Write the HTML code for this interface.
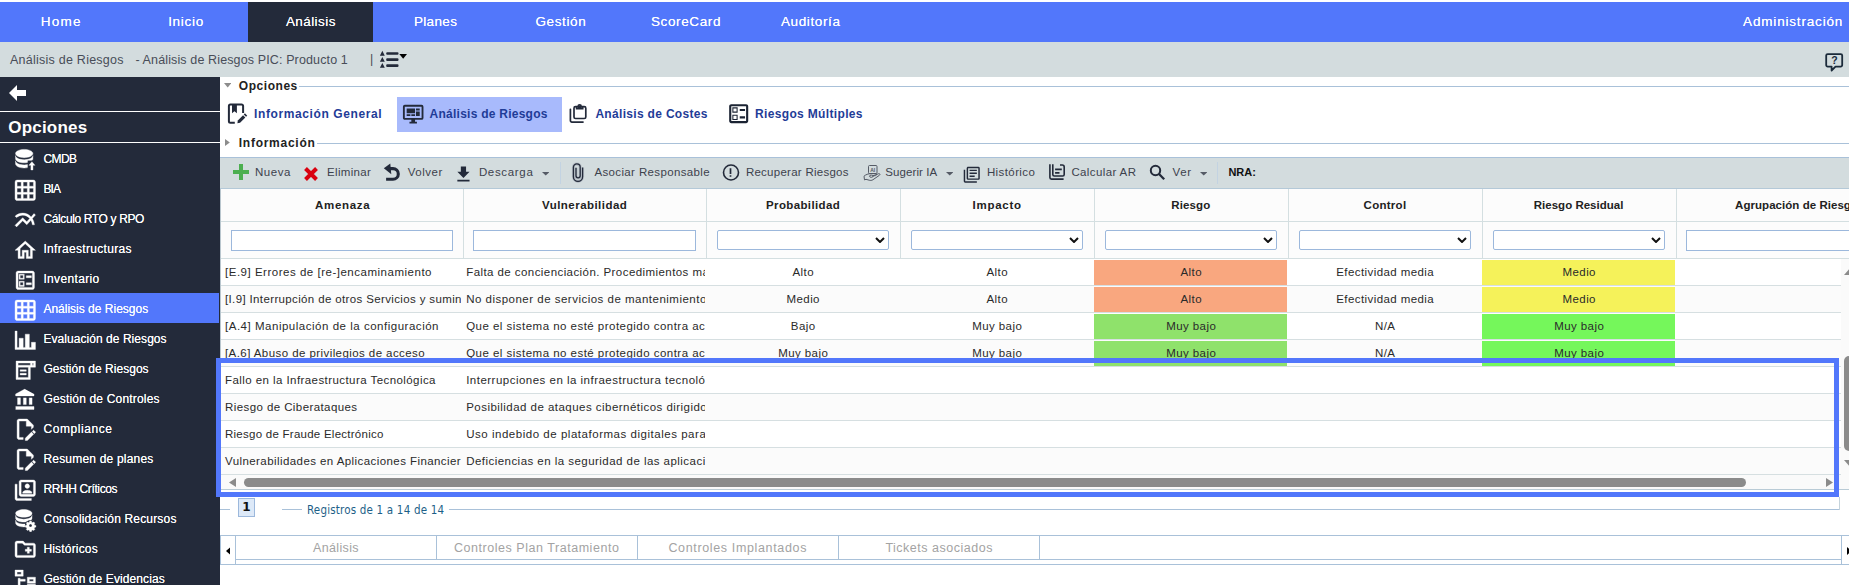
<!DOCTYPE html>
<html lang="es">
<head>
<meta charset="utf-8">
<title>Análisis de Riesgos</title>
<style>
*{box-sizing:border-box;margin:0;padding:0}
html,body{width:1849px;height:585px;overflow:hidden;background:#fff}
body{font-family:"Liberation Sans",sans-serif;font-size:12px;color:#333;position:relative}
.abs,.t,svg.i{position:absolute}
.t{white-space:nowrap;display:block}
.w{text-shadow:0 0 .5px rgba(255,255,255,.9)}
.k{text-shadow:0 0 .4px rgba(40,40,40,.6)}
#nav{position:absolute;left:0;top:2px;width:1849px;height:40px;background:#5277fb}
#crumb{position:absolute;left:0;top:42px;width:1849px;height:35px;background:#d3dcde}
#side{position:absolute;left:0;top:77px;width:220px;height:508px;background:#232a3a}
.ln{position:absolute;height:1px;background:#a9c1d9}
.vl{position:absolute;width:1px;background:#a9c1d9}
.hc{position:absolute;top:189px;height:33px;background:#fcfcfc;border-left:1px solid #d4dfe1;border-bottom:1px solid #d4dfe1}
.fc{position:absolute;top:222px;height:37px;background:#fcfcfc;border-left:1px solid #d4dfe1;border-bottom:1px solid #d4dfe1}
.in{position:absolute;top:230px;height:21px;border:1px solid #9cb8dc;background:#fff}
.se{position:absolute;top:230px;height:20px;border:1px solid #9cb8dc;background:#fff;border-radius:2px}
.row{position:absolute;left:220px;width:1621px;height:27px;border-bottom:1px solid #d6dfe1;background:#fff}
.cell{position:absolute;overflow:hidden;height:26px}
.cell .t{position:absolute}
</style>
</head>
<body>

<div id="nav"></div>
<div class="abs" style="left:248px;top:2px;width:125px;height:40px;background:#232a3a"></div>
<span class="t w" style="left:40.65px;top:12.77px;font-size:13.5px;line-height:17.5px;letter-spacing:1.246px;color:#fff;">Home</span>
<span class="t w" style="left:168.15px;top:12.77px;font-size:13.5px;line-height:17.5px;letter-spacing:0.697px;color:#fff;">Inicio</span>
<span class="t w" style="left:285.90px;top:12.77px;font-size:13.5px;line-height:17.5px;letter-spacing:0.426px;color:#fff;">Análisis</span>
<span class="t w" style="left:413.90px;top:12.77px;font-size:13.5px;line-height:17.5px;letter-spacing:0.344px;color:#fff;">Planes</span>
<span class="t w" style="left:535.40px;top:12.77px;font-size:13.5px;line-height:17.5px;letter-spacing:0.621px;color:#fff;">Gestión</span>
<span class="t w" style="left:650.90px;top:12.77px;font-size:13.5px;line-height:17.5px;letter-spacing:0.621px;color:#fff;">ScoreCard</span>
<span class="t w" style="left:780.90px;top:12.77px;font-size:13.5px;line-height:17.5px;letter-spacing:0.621px;color:#fff;">Auditoría</span>
<span class="t w" style="left:1743.10px;top:12.77px;font-size:13.5px;line-height:17.5px;letter-spacing:0.820px;color:#fff;">Administración</span>
<div id="crumb"></div>
<span class="t" style="left:10.00px;top:52.12px;font-size:12.5px;line-height:16.5px;letter-spacing:0.245px;color:#484d58;">Análisis de Riesgos</span>
<span class="t" style="left:135.40px;top:52.12px;font-size:12.5px;line-height:16.5px;letter-spacing:0.129px;color:#484d58;">- Análisis de Riesgos PIC: Producto 1</span>
<span class="t" style="left:370.10px;top:50.52px;font-size:12.5px;line-height:16.5px;letter-spacing:0.000px;color:#484d58;">|</span>
<svg class="i" style="left:378px;top:49px" width="32" height="22" viewBox="378 49 32 22"><g fill="#232a3a"><path d="M379.900 55.800h4.900l-2.450-5zM379.900 61.800h4.900l-2.450-4.900zM379.900 67.800h4.900l-2.450-4.900z"/><rect x="386.200" y="52.200" width="12.300" height="2.600" rx="1"/><rect x="386.200" y="58.300" width="12.300" height="2.600" rx="1"/><rect x="386.200" y="64.300" width="12.300" height="2.600" rx="1"/></g><path d="M399.300 54.100h7.700l-3.850 4.700z" fill="#000"/></svg>
<svg class="i" style="left:1822px;top:50px" width="26" height="24" viewBox="1822 50 26 24"><path d="M1827.700 54.100h13a1.500 1.500 0 0 1 1.500 1.500v9.500a1.500 1.500 0 0 1 -1.500 1.500h-5.200l-3.900 3.900v-3.900h-3.900a1.500 1.500 0 0 1 -1.500 -1.500v-9.500a1.500 1.500 0 0 1 1.500 -1.500z" fill="none" stroke="#1b2a3a" stroke-width="1.800" stroke-linejoin="round"/><text x="1834.500" y="64" font-family="Liberation Sans,sans-serif" font-weight="bold" font-size="10.500" text-anchor="middle" fill="#1b2a3a">?</text></svg>
<div id="side"></div>
<div class="abs" style="left:0;top:111px;width:220px;height:1px;background:#fff"></div>
<div class="abs" style="left:0;top:142px;width:220px;height:1px;background:#fff"></div>
<svg class="i" style="left:9px;top:84.500px" width="17" height="16" viewBox="0 0 17 16"><path d="M0 8L8 0v5h9v6H8v5z" fill="#fff"/></svg>
<span class="t" style="left:8.30px;top:117.01px;font-size:17px;line-height:21px;letter-spacing:0.191px;color:#fff;font-weight:bold;">Opciones</span>
<svg class="i" style="left:13px;top:147.8px" width="24.500" height="24.500" viewBox="0 0 24 24" fill="#fff" stroke="#fff" stroke-width=".35"><path transform="translate(-1.81,-1.67) scale(1.066,1.013)" d="M12,3C7.58,3 4,4.79 4,7C4,9.21 7.58,11 12,11C16.42,11 20,9.21 20,7C20,4.79 16.42,3 12,3M4,9V12C4,14.21 7.58,16 12,16C16.42,16 20,14.21 20,12V9C20,11.21 16.42,13 12,13C7.58,13 4,11.21 4,9M4,14V17C4,19.21 7.58,21 12,21C16.42,21 20,19.21 20,17V14C20,16.21 16.42,18 12,18C7.58,18 4,16.21 4,14Z"/><rect x="14.400" y="12.300" width="9" height="11" fill="#232a3a" stroke="none"/><path d="M18.550 13.400l2.950 3.600h-1.950v4.500h-2v-4.500h-1.950z"/></svg>
<span class="t w" style="left:43.40px;top:151.04px;font-size:12px;line-height:16px;letter-spacing:-0.544px;color:#fff;">CMDB</span>
<svg class="i" style="left:13px;top:177.8px" width="24.500" height="24.500" viewBox="0 0 24 24" fill="#fff" stroke="#fff" stroke-width=".35"><path d="M10,4V8H14V4H10M16,4V8H20V4H16M16,10V14H20V10H16M16,16V20H20V16H16M14,20V16H10V20H14M8,20V16H4V20H8M8,14V10H4V14H8M8,8V4H4V8H8M10,14H14V10H10V14M4,2H20A2,2 0 0,1 22,4V20A2,2 0 0,1 20,22H4C2.92,22 2,21.1 2,20V4A2,2 0 0,1 4,2Z"/></svg>
<span class="t w" style="left:43.40px;top:181.04px;font-size:12px;line-height:16px;letter-spacing:-0.821px;color:#fff;">BIA</span>
<svg class="i" style="left:13px;top:207.8px" width="24.500" height="24.500" viewBox="0 0 24 24" fill="#fff" stroke="#fff" stroke-width=".35"><path d="M22 6.92l-1.41-1.41-2.85 3.21C15.68 6.4 12.83 5 9.61 5 6.72 5 4.07 6.16 2 8l1.42 1.42C5.12 7.93 7.27 7 9.61 7c2.74 0 5.09 1.26 6.77 3.24l-2.88 3.24-4-4L2 16.99l1.5 1.5 6-6.01 4 4 4.05-4.55c.75 1.35 1.25 2.9 1.44 4.55H21c-.22-2.3-.95-4.39-2.04-6.14L22 6.92z"/></svg>
<span class="t w" style="left:43.40px;top:211.04px;font-size:12px;line-height:16px;letter-spacing:-0.370px;color:#fff;">Cálculo RTO y RPO</span>
<svg class="i" style="left:13px;top:237.8px" width="24.500" height="24.500" viewBox="0 0 24 24" fill="#fff" stroke="#fff" stroke-width=".35"><path d="M12 5.69L17 10.19V18H15V12H9V18H7V10.19L12 5.69M12 3L2 12H5V20H11V14H13V20H19V12H22L12 3Z"/></svg>
<span class="t w" style="left:43.40px;top:241.04px;font-size:12px;line-height:16px;letter-spacing:0.315px;color:#fff;">Infraestructuras</span>
<svg class="i" style="left:13px;top:267.8px" width="24.500" height="24.500" viewBox="0 0 24 24" fill="#fff" stroke="#fff" stroke-width=".35"><path d="M13 7.5H18V9.5H13V7.5M13 14.5H18V16.5H13V14.5M19 3C20.1 3 21 3.9 21 5V19C21 20.1 20.1 21 19 21H5C3.9 21 3 20.1 3 19V5C3 3.9 3.9 3 5 3H19M19 19V5H5V19H19M11 6V11H6V6H11M10 10V7H7V10H10M11 13V18H6V13H11M10 17V14H7V17H10Z"/></svg>
<span class="t w" style="left:43.40px;top:271.04px;font-size:12px;line-height:16px;letter-spacing:0.355px;color:#fff;">Inventario</span>
<div class="abs" style="left:0;top:293px;width:219px;height:30px;background:#5277fb"></div>
<svg class="i" style="left:13px;top:297.8px" width="24.500" height="24.500" viewBox="0 0 24 24" fill="#fff" stroke="#fff" stroke-width=".35"><path d="M10,4V8H14V4H10M16,4V8H20V4H16M16,10V14H20V10H16M16,16V20H20V16H16M14,20V16H10V20H14M8,20V16H4V20H8M8,14V10H4V14H8M8,8V4H4V8H8M10,14H14V10H10V14M4,2H20A2,2 0 0,1 22,4V20A2,2 0 0,1 20,22H4C2.92,22 2,21.1 2,20V4A2,2 0 0,1 4,2Z"/></svg>
<span class="t w" style="left:43.40px;top:301.04px;font-size:12px;line-height:16px;letter-spacing:0.004px;color:#fff;">Análisis de Riesgos</span>
<svg class="i" style="left:13px;top:327.8px" width="24.500" height="24.500" viewBox="0 0 24 24" fill="#fff" stroke="#fff" stroke-width=".35"><path d="M22,21H2V3H4V19H6V10H10V19H12V6H16V19H18V14H22V21Z"/></svg>
<span class="t w" style="left:43.40px;top:331.04px;font-size:12px;line-height:16px;letter-spacing:0.056px;color:#fff;">Evaluación de Riesgos</span>
<svg class="i" style="left:13px;top:357.8px" width="24.500" height="24.500" viewBox="0 0 24 24" fill="#fff" stroke="#fff" stroke-width=".35"><path d="M3 3h19v6h-5v12H3zM5 5v2h12V5zM5 9v10h10V9zM19 5v2h1V5zM7 11.5h6v1.6H7zM7 15h6v1.600H7z" fill-rule="evenodd"/></svg>
<span class="t w" style="left:43.40px;top:361.04px;font-size:12px;line-height:16px;letter-spacing:0.028px;color:#fff;">Gestión de Riesgos</span>
<svg class="i" style="left:13px;top:387.8px" width="24.500" height="24.500" viewBox="0 0 24 24" fill="#fff" stroke="#fff" stroke-width=".35"><path transform="translate(.65,.13) scale(.95)" d="M11.5,1L2,6V8H21V6M16,10V17H19V10M2,22H21V19H2M10,10V17H13V10M4,10V17H7V10H4Z"/></svg>
<span class="t w" style="left:43.40px;top:391.04px;font-size:12px;line-height:16px;letter-spacing:0.177px;color:#fff;">Gestión de Controles</span>
<svg class="i" style="left:13px;top:417.1px" width="24.500" height="24.500" viewBox="0 0 24 24" fill="#fff" stroke="#fff" stroke-width=".35"><path d="M10 20H6V4H13V9H18V12.1L20 10.1V8L14 2H6C4.9 2 4 2.9 4 4V20C4 21.1 4.9 22 6 22H10V20M20.2 13C20.3 13 20.5 13.1 20.6 13.2L21.9 14.5C22.1 14.7 22.1 15.1 21.9 15.3L20.9 16.3L18.8 14.2L19.8 13.2C19.9 13.1 20 13 20.2 13M20.2 16.9L14.1 23H12V20.9L18.1 14.8L20.2 16.9Z"/></svg>
<span class="t w" style="left:43.40px;top:421.04px;font-size:12px;line-height:16px;letter-spacing:0.582px;color:#fff;">Compliance</span>
<svg class="i" style="left:13px;top:447.1px" width="24.500" height="24.500" viewBox="0 0 24 24" fill="#fff" stroke="#fff" stroke-width=".35"><path d="M10 20H6V4H13V9H18V12.1L20 10.1V8L14 2H6C4.9 2 4 2.9 4 4V20C4 21.1 4.9 22 6 22H10V20M20.2 13C20.3 13 20.5 13.1 20.6 13.2L21.9 14.5C22.1 14.7 22.1 15.1 21.9 15.3L20.9 16.3L18.8 14.2L19.8 13.2C19.9 13.1 20 13 20.2 13M20.2 16.9L14.1 23H12V20.9L18.1 14.8L20.2 16.9Z"/></svg>
<span class="t w" style="left:43.40px;top:451.04px;font-size:12px;line-height:16px;letter-spacing:0.198px;color:#fff;">Resumen de planes</span>
<svg class="i" style="left:13px;top:477.8px" width="24.500" height="24.500" viewBox="0 0 24 24" fill="#fff" stroke="#fff" stroke-width=".35"><path d="M4 6H2V20C2 21.11 2.9 22 4 22H18V20H4V6M18.5 14.25C18.5 12.75 15.5 12 14 12S9.5 12.75 9.5 14.25V15H18.5M14 10.25C15.24 10.25 16.25 9.24 16.25 8S15.24 5.75 14 5.75 11.75 6.76 11.75 8 12.76 10.25 14 10.25M20 2H8C6.9 2 6 2.9 6 4V16C6 17.11 6.9 18 8 18H20C21.11 18 22 17.11 22 16V4C22 2.9 21.11 2 20 2M20 16H8V4H20V16Z"/></svg>
<span class="t w" style="left:43.40px;top:481.04px;font-size:12px;line-height:16px;letter-spacing:-0.372px;color:#fff;">RRHH Críticos</span>
<svg class="i" style="left:13px;top:507.8px" width="24.500" height="24.500" viewBox="0 0 24 24" fill="#fff" stroke="#fff" stroke-width=".35"><path transform="translate(-1.47,-1.37) scale(1.005,.948)" d="M12,3C7.58,3 4,4.79 4,7C4,9.21 7.58,11 12,11C16.42,11 20,9.21 20,7C20,4.79 16.42,3 12,3M4,9V12C4,14.21 7.58,16 12,16C16.42,16 20,14.21 20,12V9C20,11.21 16.42,13 12,13C7.58,13 4,11.21 4,9M4,14V17C4,19.21 7.58,21 12,21C16.42,21 20,19.21 20,17V14C20,16.21 16.42,18 12,18C7.58,18 4,16.21 4,14Z"/><circle cx="17.200" cy="17.200" r="5.500" fill="#232a3a" stroke="none"/><path transform="translate(1.070,1.070) scale(.87)" d="M18.500 13.200l1 .1.300 1.400 1 .5 1.300-.7 1.300 1.300-.7 1.300.5 1 1.400.3v1.900l-1.400.3-.5 1 .7 1.300-1.300 1.300-1.300-.7-1 .5-.3 1.400h-1.900l-.3-1.400-1-.5-1.300.7-1.300-1.300.7-1.300-.5-1-1.400-.3v-1.900l1.400-.3.5-1-.7-1.300 1.300-1.300 1.300.7 1-.5.300-1.400zM18.500 16.800a1.700 1.700 0 1 0 0 3.400 1.700 1.700 0 0 0 0-3.400z" fill-rule="evenodd"/></svg>
<span class="t w" style="left:43.40px;top:511.04px;font-size:12px;line-height:16px;letter-spacing:0.171px;color:#fff;">Consolidación Recursos</span>
<svg class="i" style="left:13px;top:537.3px" width="24.500" height="24.500" viewBox="0 0 24 24" fill="#fff" stroke="#fff" stroke-width=".35"><path d="M20 6h-8l-2-2H4c-1.11 0-1.99.89-1.99 2L2 18c0 1.11.89 2 2 2h16c1.11 0 2-.89 2-2V8c0-1.11-.89-2-2-2zm0 12H4V6h5.17l2 2H20v10zm-8-4h2v2h2v-2h2v-2h-2v-2h-2v2h-2z"/></svg>
<span class="t w" style="left:43.40px;top:541.04px;font-size:12px;line-height:16px;letter-spacing:0.180px;color:#fff;">Históricos</span>
<svg class="i" style="left:13px;top:567.8px" width="24.500" height="24.500" viewBox="0 0 24 24" fill="#fff" stroke="#fff" stroke-width=".35"><path d="M12 13H7V18H12V20H5V10H7V11H12V13M8 4V6H4V4H8M10 2H2V8H10V2M20 11V13H16V11H20M22 9H14V15H22V9M20 18V20H16V18H20M22 16H14V22H22V16Z"/></svg>
<span class="t w" style="left:43.40px;top:571.04px;font-size:12px;line-height:16px;letter-spacing:0.095px;color:#fff;">Gestión de Evidencias</span>
<div class="ln" style="left:299px;top:86px;width:1550px"></div>
<span class="t" style="left:238.80px;top:78.34px;font-size:12px;line-height:16px;letter-spacing:0.546px;color:#222;font-weight:bold;">Opciones</span>
<svg class="i" style="left:223.500px;top:83.400px" width="7.400" height="4.400" viewBox="0 0 7.400 4.400"><path d="M0 0h7.400L3.700 4.400z" fill="#8c8c8c"/></svg>
<div class="ln" style="left:317px;top:143px;width:1532px"></div>
<span class="t" style="left:238.80px;top:134.84px;font-size:12px;line-height:16px;letter-spacing:0.733px;color:#222;font-weight:bold;">Información</span>
<svg class="i" style="left:225.200px;top:139.300px" width="4.800" height="7" viewBox="0 0 4.800 7"><path d="M0 0v7L4.800 3.500z" fill="#8c8c8c"/></svg>
<div class="abs" style="left:397px;top:97px;width:165px;height:35px;background:#a8bafc"></div>
<span class="t" style="left:254.00px;top:106.24px;font-size:12px;line-height:16px;letter-spacing:0.606px;color:#1f3c97;font-weight:bold;">Información General</span>
<span class="t" style="left:429.60px;top:106.24px;font-size:12px;line-height:16px;letter-spacing:0.246px;color:#1f3c97;font-weight:bold;">Análisis de Riesgos</span>
<span class="t" style="left:595.40px;top:106.24px;font-size:12px;line-height:16px;letter-spacing:0.317px;color:#1f3c97;font-weight:bold;">Análisis de Costes</span>
<span class="t" style="left:755.00px;top:106.24px;font-size:12px;line-height:16px;letter-spacing:0.343px;color:#1f3c97;font-weight:bold;">Riesgos Múltiples</span>
<svg class="i" style="left:222px;top:98px" width="30" height="30" viewBox="0 0 30 30"><path d="M21.100 14.900V8a1.500 1.500 0 0 0 -1.500 -1.500H8.400a1.500 1.500 0 0 0 -1.500 1.500V23.200a1.500 1.500 0 0 0 1.500 1.500H12.800" fill="none" stroke="#232a3a" stroke-width="2"/><path d="M10 6.500h4.900v8.700l-2.450-1.900-2.450 1.900z" fill="#232a3a"/><path d="M15.400 25.200L15.830 22.510L21.060 17.280L23.320 19.540L18.090 24.770Z" fill="#232a3a"/><path d="M22.900 17.700L24.100 16.500" stroke="#232a3a" stroke-width="3.200" fill="none"/></svg>
<svg class="i" style="left:402.200px;top:103px" width="22.400" height="22.400" viewBox="0 0 24 24"><path fill="#232a3a" d="M21,16V4H3V16H21M21,2A2,2 0 0,1 23,4V16A2,2 0 0,1 21,18H14V20H16V22H8V20H10V18H3C1.890,18 1,17.100 1,16V4C1,2.890 1.890,2 3,2H21M5,6H14V11H5V6M15,6H19V8H15V6M19,9V14H15V9H19M5,12H9V14H5V12M10,12H14V14H10V12Z"/></svg>
<svg class="i" style="left:564px;top:98px" width="30" height="30" viewBox="0 0 30 30" fill="none" stroke="#232a3a" stroke-width="1.700"><rect x="10" y="8.700" width="11.800" height="11.800" rx="1.500"/><path d="M12.600 8.700v1.900h6.100V8.700"/><circle cx="15.650" cy="8.400" r="1.500"/><path d="M6.400 11.300V22.600a1.500 1.500 0 0 0 1.500 1.500H19" stroke-linecap="round"/></svg>
<svg class="i" style="left:725.700px;top:100.800px" width="25.400" height="25.400" viewBox="0 0 24 24"><path fill="#1b2333" d="M13 7.500H18V9.500H13V7.500M13 14.500H18V16.500H13V14.500M19 3C20.100 3 21 3.900 21 5V19C21 20.100 20.100 21 19 21H5C3.900 21 3 20.100 3 19V5C3 3.900 3.900 3 5 3H19M19 19V5H5V19H19M11 6V11H6V6H11M10 10V7H7V10H10M11 13V18H6V13H11M10 17V14H7V17H10Z"/></svg>
<div class="abs" style="left:220px;top:157px;width:1629px;height:32px;background:#d3dcde;border-top:1px solid #a9c1d9;border-bottom:1px solid #b4c9d8"></div>
<span class="t" style="left:255.00px;top:164.77px;font-size:11.5px;line-height:15.5px;letter-spacing:0.539px;color:#3d424d;">Nueva</span>
<span class="t" style="left:327.00px;top:164.77px;font-size:11.5px;line-height:15.5px;letter-spacing:0.337px;color:#3d424d;">Eliminar</span>
<span class="t" style="left:407.80px;top:164.77px;font-size:11.5px;line-height:15.5px;letter-spacing:0.507px;color:#3d424d;">Volver</span>
<span class="t" style="left:478.90px;top:164.77px;font-size:11.5px;line-height:15.5px;letter-spacing:0.669px;color:#3d424d;">Descarga</span>
<span class="t" style="left:594.40px;top:164.77px;font-size:11.5px;line-height:15.5px;letter-spacing:0.368px;color:#3d424d;">Asociar Responsable</span>
<span class="t" style="left:745.90px;top:164.77px;font-size:11.5px;line-height:15.5px;letter-spacing:0.260px;color:#3d424d;">Recuperar Riesgos</span>
<span class="t" style="left:885.30px;top:164.77px;font-size:11.5px;line-height:15.5px;letter-spacing:0.085px;color:#3d424d;">Sugerir IA</span>
<span class="t" style="left:986.90px;top:164.77px;font-size:11.5px;line-height:15.5px;letter-spacing:0.408px;color:#3d424d;">Histórico</span>
<span class="t" style="left:1071.40px;top:164.77px;font-size:11.5px;line-height:15.5px;letter-spacing:0.388px;color:#3d424d;">Calcular AR</span>
<span class="t" style="left:1172.50px;top:164.77px;font-size:11.5px;line-height:15.5px;letter-spacing:0.719px;color:#3d424d;">Ver</span>
<span class="t" style="left:1228.40px;top:165.19px;font-size:11px;line-height:15px;letter-spacing:0.001px;color:#111;font-weight:bold;">NRA:</span>
<div class="vl" style="left:559.500px;top:162px;height:22px;background:#c3d3e2"></div>
<div class="vl" style="left:1217px;top:162px;height:22px;background:#c3d3e2"></div>
<svg class="i" style="left:541.6px;top:172.200px" width="7.400" height="3.600" viewBox="0 0 7.400 3.600"><path d="M0 0h7.400L3.700 3.600z" fill="#555b66"/></svg>
<svg class="i" style="left:946.1px;top:172.200px" width="7.400" height="3.600" viewBox="0 0 7.400 3.600"><path d="M0 0h7.400L3.700 3.600z" fill="#555b66"/></svg>
<svg class="i" style="left:1199.9px;top:172.200px" width="7.400" height="3.600" viewBox="0 0 7.400 3.600"><path d="M0 0h7.400L3.700 3.600z" fill="#555b66"/></svg>
<svg class="i" style="left:233px;top:164px" width="16" height="16" viewBox="0 0 16 16"><path d="M6 0h4v6h6v4h-6v6H6v-6H0V6h6z" fill="#4caf50"/></svg>
<svg class="i" style="left:304px;top:167px" width="14" height="14" viewBox="0 0 14 14"><path d="M1.500 1.500l11 11M12.500 1.500l-11 11" stroke="#d9000f" stroke-width="4" fill="none"/></svg>
<svg class="i" style="left:378px;top:158px" width="30" height="30" viewBox="0 0 30 30"><path d="M12 10.600H15A5.300 5.300 0 0 1 15 21.200H8.100" fill="none" stroke="#232a3a" stroke-width="3.100"/><path d="M5.800 10.300L12.300 5.500L13.300 16.300z" fill="#232a3a"/></svg>
<svg class="i" style="left:452.650px;top:163.500px" width="20.900" height="20.900" viewBox="0 0 24 24"><path fill="#232a3a" d="M5,20H19V18H5M19,9H15V3H9V9H5L12,16L19,9Z"/></svg>
<svg class="i" style="left:570px;top:160px" width="16" height="26" viewBox="570 160 16 26"><path d="M582.600 167.500V176.800A4.600 4.600 0 0 1 573.400 176.800V167.300A3.400 3.400 0 0 1 580.200 167.300V175.800A2.100 2.100 0 0 1 576 175.800V167.700" fill="none" stroke="#b4bcc4" stroke-width="3"/><path d="M582.600 167.500V176.800A4.600 4.600 0 0 1 573.400 176.800V167.300A3.400 3.400 0 0 1 580.200 167.300V175.800A2.100 2.100 0 0 1 576 175.800V167.700" fill="none" stroke="#232a3a" stroke-width="1.300"/></svg>
<svg class="i" style="left:720px;top:162px" width="22" height="22" viewBox="720 162 22 22"><circle cx="731" cy="172.500" r="7.500" fill="none" stroke="#232a3a" stroke-width="1.600"/><path d="M730.500 168.300v5.600M730.500 175.300v1.500" stroke="#232a3a" stroke-width="1.700"/></svg>
<svg class="i" style="left:860px;top:162px" width="24" height="22" viewBox="860 162 24 22"><g fill="none" stroke="#555b66" stroke-width="1"><rect x="868.500" y="165.500" width="8.500" height="8" rx="1"/><path d="M864 176.200c1.500-1.500 4.500-2.600 7-2.600h4.500c1.500 0 1.500 1.800 0 2l-3 .4 6-2.300c1.300-.5 2 .8 .9 1.600l-6.400 4.400c-1.200.8-2.500.9-3.800.5l-3.200-.9-1.500.6z"/><ellipse cx="871.300" cy="176.200" rx="1.800" ry="1.100"/></g><text x="872.750" y="171.900" font-family="Liberation Sans,sans-serif" font-size="5" font-weight="bold" text-anchor="middle" fill="#555b66">AI</text></svg>
<svg class="i" style="left:963.400px;top:166.300px" width="17.500" height="17.500" viewBox="0 0 24 24"><path fill="#232a3a" d="M16,15H9V13H16V15M19,11H9V9H19V11M19,7H9V5H19V7M3,5V21H19V23H3A2,2 0 0,1 1,21V5H3M21,1A2,2 0 0,1 23,3V17C23,18.110 22.110,19 21,19H7A2,2 0 0,1 5,17V3C5,1.890 5.890,1 7,1H21M7,3V17H21V3H7Z"/></svg>
<svg class="i" style="left:1046px;top:161px" width="22" height="22" viewBox="1046 161 22 22"><g fill="none" stroke="#232a3a" stroke-width="1.600"><path d="M1049.900 164.200V177.600a1.500 1.500 0 0 0 1.500 1.500H1063.600"/><path d="M1052.800 164.200V174.500a1.500 1.500 0 0 0 1.500 1.500H1062.700a1.500 1.500 0 0 0 1.500 -1.500V167a2 2 0 0 0 -2 -2H1060"/><path d="M1055.100 169.400h6.700M1055.100 172.900h4.400"/></g></svg>
<svg class="i" style="left:1146px;top:161px" width="22" height="22" viewBox="1146 161 22 22"><circle cx="1155.500" cy="170.500" r="4.700" fill="none" stroke="#232a3a" stroke-width="2"/><path d="M1159 174l5.200 5.200" stroke="#232a3a" stroke-width="2.300"/></svg>
<div class="hc" style="left:220px;width:243px"></div><div class="fc" style="left:220px;width:243px"></div>
<span class="t" style="left:315.00px;top:197.77px;font-size:11.5px;line-height:15.5px;letter-spacing:0.684px;color:#222;font-weight:bold;">Amenaza</span>
<div class="in" style="left:231px;width:222px"></div>
<div class="hc" style="left:463px;width:243px"></div><div class="fc" style="left:463px;width:243px"></div>
<span class="t" style="left:542.00px;top:197.77px;font-size:11.5px;line-height:15.5px;letter-spacing:0.461px;color:#222;font-weight:bold;">Vulnerabilidad</span>
<div class="in" style="left:473px;width:223px"></div>
<div class="hc" style="left:706px;width:194px"></div><div class="fc" style="left:706px;width:194px"></div>
<span class="t" style="left:766.00px;top:197.77px;font-size:11.5px;line-height:15.5px;letter-spacing:0.368px;color:#222;font-weight:bold;">Probabilidad</span>
<div class="se" style="left:717px;width:172px"></div>
<svg class="i" style="left:875px;top:237px" width="10" height="6" viewBox="0 0 10 6"><path d="M1 1l4 4 4-4" fill="none" stroke="#111" stroke-width="2"/></svg>
<div class="hc" style="left:900px;width:194px"></div><div class="fc" style="left:900px;width:194px"></div>
<span class="t" style="left:972.60px;top:197.77px;font-size:11.5px;line-height:15.5px;letter-spacing:0.735px;color:#222;font-weight:bold;">Impacto</span>
<div class="se" style="left:911px;width:172px"></div>
<svg class="i" style="left:1069px;top:237px" width="10" height="6" viewBox="0 0 10 6"><path d="M1 1l4 4 4-4" fill="none" stroke="#111" stroke-width="2"/></svg>
<div class="hc" style="left:1094px;width:194px"></div><div class="fc" style="left:1094px;width:194px"></div>
<span class="t" style="left:1171.30px;top:197.77px;font-size:11.5px;line-height:15.5px;letter-spacing:0.132px;color:#222;font-weight:bold;">Riesgo</span>
<div class="se" style="left:1105px;width:172px"></div>
<svg class="i" style="left:1263px;top:237px" width="10" height="6" viewBox="0 0 10 6"><path d="M1 1l4 4 4-4" fill="none" stroke="#111" stroke-width="2"/></svg>
<div class="hc" style="left:1288px;width:194px"></div><div class="fc" style="left:1288px;width:194px"></div>
<span class="t" style="left:1363.60px;top:197.77px;font-size:11.5px;line-height:15.5px;letter-spacing:0.270px;color:#222;font-weight:bold;">Control</span>
<div class="se" style="left:1299px;width:172px"></div>
<svg class="i" style="left:1457px;top:237px" width="10" height="6" viewBox="0 0 10 6"><path d="M1 1l4 4 4-4" fill="none" stroke="#111" stroke-width="2"/></svg>
<div class="hc" style="left:1482px;width:194px"></div><div class="fc" style="left:1482px;width:194px"></div>
<span class="t" style="left:1533.80px;top:197.77px;font-size:11.5px;line-height:15.5px;letter-spacing:0.009px;color:#222;font-weight:bold;">Riesgo Residual</span>
<div class="se" style="left:1493px;width:172px"></div>
<svg class="i" style="left:1651px;top:237px" width="10" height="6" viewBox="0 0 10 6"><path d="M1 1l4 4 4-4" fill="none" stroke="#111" stroke-width="2"/></svg>
<div class="hc" style="left:1676px;width:243px"></div><div class="fc" style="left:1676px;width:243px"></div>
<span class="t" style="left:1735.10px;top:197.77px;font-size:11.5px;line-height:15.5px;letter-spacing:0.043px;color:#222;font-weight:bold;">Agrupación de Riesgos</span>
<div class="in" style="left:1686px;width:223px"></div>
<div class="row" style="top:259px;background:#fff"></div>
<div class="cell" style="left:221px;top:259px;width:240.300px">
<span class="t" style="left:4.00px;top:5.57px;font-size:11.5px;line-height:15.5px;letter-spacing:0.513px;color:#2a2a2a;">[E.9] Errores de [re-]encaminamiento</span>
</div>
<div class="cell" style="left:464px;top:259px;width:241px">
<span class="t" style="left:2.20px;top:5.57px;font-size:11.5px;line-height:15.5px;letter-spacing:0.430px;color:#2a2a2a;">Falta de concienciación. Procedimientos más</span>
</div>
<div class="abs" style="left:1094px;top:260px;width:193px;height:25px;background:#f9a77f"></div>
<div class="abs" style="left:1482px;top:260px;width:193px;height:25px;background:#f5f25a"></div>
<span class="t" style="left:792.46px;top:264.57px;font-size:11.5px;line-height:15.5px;letter-spacing:0.420px;color:#2a2a2a;">Alto</span>
<span class="t" style="left:986.46px;top:264.57px;font-size:11.5px;line-height:15.5px;letter-spacing:0.420px;color:#2a2a2a;">Alto</span>
<span class="t" style="left:1180.46px;top:264.57px;font-size:11.5px;line-height:15.5px;letter-spacing:0.420px;color:#2a2a2a;">Alto</span>
<span class="t" style="left:1336.25px;top:264.57px;font-size:11.5px;line-height:15.5px;letter-spacing:0.420px;color:#2a2a2a;">Efectividad media</span>
<span class="t" style="left:1562.50px;top:264.57px;font-size:11.5px;line-height:15.5px;letter-spacing:0.420px;color:#2a2a2a;">Medio</span>
<div class="row" style="top:286px;background:#fbfbfb"></div>
<div class="cell" style="left:221px;top:286px;width:240.300px">
<span class="t" style="left:4.00px;top:5.57px;font-size:11.5px;line-height:15.5px;letter-spacing:0.363px;color:#2a2a2a;">[I.9] Interrupción de otros Servicios y suministros</span>
</div>
<div class="cell" style="left:464px;top:286px;width:241px">
<span class="t" style="left:2.20px;top:5.57px;font-size:11.5px;line-height:15.5px;letter-spacing:0.489px;color:#2a2a2a;">No disponer de servicios de mantenimiento</span>
</div>
<div class="abs" style="left:1094px;top:287px;width:193px;height:25px;background:#f9a77f"></div>
<div class="abs" style="left:1482px;top:287px;width:193px;height:25px;background:#f5f25a"></div>
<span class="t" style="left:786.50px;top:291.57px;font-size:11.5px;line-height:15.5px;letter-spacing:0.420px;color:#2a2a2a;">Medio</span>
<span class="t" style="left:986.46px;top:291.57px;font-size:11.5px;line-height:15.5px;letter-spacing:0.420px;color:#2a2a2a;">Alto</span>
<span class="t" style="left:1180.46px;top:291.57px;font-size:11.5px;line-height:15.5px;letter-spacing:0.420px;color:#2a2a2a;">Alto</span>
<span class="t" style="left:1336.25px;top:291.57px;font-size:11.5px;line-height:15.5px;letter-spacing:0.420px;color:#2a2a2a;">Efectividad media</span>
<span class="t" style="left:1562.50px;top:291.57px;font-size:11.5px;line-height:15.5px;letter-spacing:0.420px;color:#2a2a2a;">Medio</span>
<div class="row" style="top:313px;background:#fff"></div>
<div class="cell" style="left:221px;top:313px;width:240.300px">
<span class="t" style="left:4.00px;top:5.57px;font-size:11.5px;line-height:15.5px;letter-spacing:0.518px;color:#2a2a2a;">[A.4] Manipulación de la configuración</span>
</div>
<div class="cell" style="left:464px;top:313px;width:241px">
<span class="t" style="left:2.20px;top:5.57px;font-size:11.5px;line-height:15.5px;letter-spacing:0.472px;color:#2a2a2a;">Que el sistema no esté protegido contra accesos</span>
</div>
<div class="abs" style="left:1094px;top:314px;width:193px;height:25px;background:#8fe26b"></div>
<div class="abs" style="left:1482px;top:314px;width:193px;height:25px;background:#75f75b"></div>
<span class="t" style="left:790.86px;top:318.57px;font-size:11.5px;line-height:15.5px;letter-spacing:0.420px;color:#2a2a2a;">Bajo</span>
<span class="t" style="left:972.20px;top:318.57px;font-size:11.5px;line-height:15.5px;letter-spacing:0.420px;color:#2a2a2a;">Muy bajo</span>
<span class="t" style="left:1166.20px;top:318.57px;font-size:11.5px;line-height:15.5px;letter-spacing:0.420px;color:#2a2a2a;">Muy bajo</span>
<span class="t" style="left:1374.99px;top:318.57px;font-size:11.5px;line-height:15.5px;letter-spacing:0.420px;color:#2a2a2a;">N/A</span>
<span class="t" style="left:1554.20px;top:318.57px;font-size:11.5px;line-height:15.5px;letter-spacing:0.420px;color:#2a2a2a;">Muy bajo</span>
<div class="row" style="top:340px;background:#fbfbfb"></div>
<div class="cell" style="left:221px;top:340px;width:240.300px">
<span class="t" style="left:4.00px;top:5.57px;font-size:11.5px;line-height:15.5px;letter-spacing:0.427px;color:#2a2a2a;">[A.6] Abuso de privilegios de acceso</span>
</div>
<div class="cell" style="left:464px;top:340px;width:241px">
<span class="t" style="left:2.20px;top:5.57px;font-size:11.5px;line-height:15.5px;letter-spacing:0.472px;color:#2a2a2a;">Que el sistema no esté protegido contra accesos</span>
</div>
<div class="abs" style="left:1094px;top:341px;width:193px;height:25px;background:#8fe26b"></div>
<div class="abs" style="left:1482px;top:341px;width:193px;height:25px;background:#75f75b"></div>
<span class="t" style="left:778.20px;top:345.57px;font-size:11.5px;line-height:15.5px;letter-spacing:0.420px;color:#2a2a2a;">Muy bajo</span>
<span class="t" style="left:972.20px;top:345.57px;font-size:11.5px;line-height:15.5px;letter-spacing:0.420px;color:#2a2a2a;">Muy bajo</span>
<span class="t" style="left:1166.20px;top:345.57px;font-size:11.5px;line-height:15.5px;letter-spacing:0.420px;color:#2a2a2a;">Muy bajo</span>
<span class="t" style="left:1374.99px;top:345.57px;font-size:11.5px;line-height:15.5px;letter-spacing:0.420px;color:#2a2a2a;">N/A</span>
<span class="t" style="left:1554.20px;top:345.57px;font-size:11.5px;line-height:15.5px;letter-spacing:0.420px;color:#2a2a2a;">Muy bajo</span>
<div class="row" style="top:367px;background:#fff"></div>
<div class="cell" style="left:221px;top:367px;width:240.300px">
<span class="t" style="left:4.00px;top:5.57px;font-size:11.5px;line-height:15.5px;letter-spacing:0.431px;color:#2a2a2a;">Fallo en la Infraestructura Tecnológica</span>
</div>
<div class="cell" style="left:464px;top:367px;width:241px">
<span class="t" style="left:2.20px;top:5.57px;font-size:11.5px;line-height:15.5px;letter-spacing:0.484px;color:#2a2a2a;">Interrupciones en la infraestructura tecnológica</span>
</div>
<div class="row" style="top:394px;background:#fbfbfb"></div>
<div class="cell" style="left:221px;top:394px;width:240.300px">
<span class="t" style="left:4.00px;top:5.57px;font-size:11.5px;line-height:15.5px;letter-spacing:0.415px;color:#2a2a2a;">Riesgo de Ciberataques</span>
</div>
<div class="cell" style="left:464px;top:394px;width:241px">
<span class="t" style="left:2.20px;top:5.57px;font-size:11.5px;line-height:15.5px;letter-spacing:0.465px;color:#2a2a2a;">Posibilidad de ataques cibernéticos dirigidos</span>
</div>
<div class="row" style="top:421px;background:#fff"></div>
<div class="cell" style="left:221px;top:421px;width:240.300px">
<span class="t" style="left:4.00px;top:5.57px;font-size:11.5px;line-height:15.5px;letter-spacing:0.255px;color:#2a2a2a;">Riesgo de Fraude Electrónico</span>
</div>
<div class="cell" style="left:464px;top:421px;width:241px">
<span class="t" style="left:2.20px;top:5.57px;font-size:11.5px;line-height:15.5px;letter-spacing:0.527px;color:#2a2a2a;">Uso indebido de plataformas digitales para</span>
</div>
<div class="row" style="top:448px;background:#fbfbfb"></div>
<div class="cell" style="left:221px;top:448px;width:240.300px">
<span class="t" style="left:4.00px;top:5.57px;font-size:11.5px;line-height:15.5px;letter-spacing:0.426px;color:#2a2a2a;">Vulnerabilidades en Aplicaciones Financieras</span>
</div>
<div class="cell" style="left:464px;top:448px;width:241px">
<span class="t" style="left:2.20px;top:5.57px;font-size:11.5px;line-height:15.5px;letter-spacing:0.459px;color:#2a2a2a;">Deficiencias en la seguridad de las aplicaciones</span>
</div>
<div class="vl" style="left:220px;top:189px;height:301px;background:#b9c6ce"></div>
<div class="abs" style="left:220px;top:475px;width:1621px;height:15px;background:#fafafa"></div>
<div class="abs" style="left:244px;top:478px;width:1502px;height:9px;border-radius:5px;background:#8b8b8b"></div>
<svg class="i" style="left:228.500px;top:478px" width="7" height="9" viewBox="0 0 7 9"><path d="M7 0v9L0 4.500z" fill="#8b8b8b"/></svg>
<svg class="i" style="left:1826px;top:478px" width="7" height="9" viewBox="0 0 7 9"><path d="M0 0v9L7 4.500z" fill="#8b8b8b"/></svg>
<div class="ln" style="left:220px;top:489px;width:1629px;background:#b9cbd6"></div>
<div class="abs" style="left:1841px;top:259px;width:8px;height:230px;background:#fafafa"></div>
<div class="abs" style="left:1844px;top:356px;width:12px;height:95px;border-radius:5px;background:#8b8b8b"></div>
<svg class="i" style="left:1844px;top:268px" width="12" height="7" viewBox="0 0 12 7"><path d="M0 7h12L6 0z" fill="#8b8b8b"/></svg>
<svg class="i" style="left:1844px;top:460px" width="12" height="7" viewBox="0 0 12 7"><path d="M0 0h12L6 7z" fill="#8b8b8b"/></svg>
<div class="ln" style="left:220px;top:509px;width:1620px"></div>
<div class="vl" style="left:1839px;top:497px;height:13px;background:#c4d3dc"></div>
<div class="abs" style="left:230px;top:500px;width:52px;height:18px;background:#fff"></div>
<div class="abs" style="left:238px;top:498px;width:17px;height:19px;border:1px solid #9cb8dc;background:#dde9f8;text-align:center;line-height:17px;font-family:'DejaVu Sans',sans-serif;font-weight:bold;font-size:12px;color:#111">1</div>
<div class="abs" style="left:302px;top:502px;height:16px;line-height:16px;padding:0 5px;background:#fff;letter-spacing:.19px;font-family:'DejaVu Sans Condensed','DejaVu Sans',sans-serif;font-size:11.500px;color:#1d5f88;white-space:nowrap">Registros de 1 a 14 de 14</div>
<div class="ln" style="left:220px;top:535px;width:1629px"></div>
<div class="ln" style="left:235px;top:559px;width:1607px"></div>
<div class="ln" style="left:220px;top:564px;width:1629px"></div>
<div class="vl" style="left:220px;top:535px;height:30px"></div>
<div class="vl" style="left:235px;top:535px;height:30px"></div>
<div class="vl" style="left:436px;top:535px;height:25px"></div>
<div class="vl" style="left:637px;top:535px;height:25px"></div>
<div class="vl" style="left:838px;top:535px;height:25px"></div>
<div class="vl" style="left:1039px;top:535px;height:25px"></div>
<div class="vl" style="left:1841px;top:535px;height:30px"></div>
<span class="t" style="left:313.00px;top:539.62px;font-size:12.5px;line-height:16.5px;letter-spacing:0.347px;color:#a3a3a3;">Análisis</span>
<span class="t" style="left:453.90px;top:539.62px;font-size:12.5px;line-height:16.5px;letter-spacing:0.541px;color:#a3a3a3;">Controles Plan Tratamiento</span>
<span class="t" style="left:668.40px;top:539.62px;font-size:12.5px;line-height:16.5px;letter-spacing:0.646px;color:#a3a3a3;">Controles Implantados</span>
<span class="t" style="left:885.40px;top:539.62px;font-size:12.5px;line-height:16.5px;letter-spacing:0.507px;color:#a3a3a3;">Tickets asociados</span>
<svg class="i" style="left:225.800px;top:546.500px" width="4.500" height="8" viewBox="0 0 4.500 8"><path d="M4.500 0v8L0 4z" fill="#000"/></svg>
<svg class="i" style="left:1846.500px;top:546.500px" width="4.500" height="8" viewBox="0 0 4.500 8"><path d="M0 0v8L4.500 4z" fill="#000"/></svg>
<div class="abs" style="left:216px;top:358px;width:1623px;height:139px;border:5px solid #5277fb"></div>
</body>
</html>
